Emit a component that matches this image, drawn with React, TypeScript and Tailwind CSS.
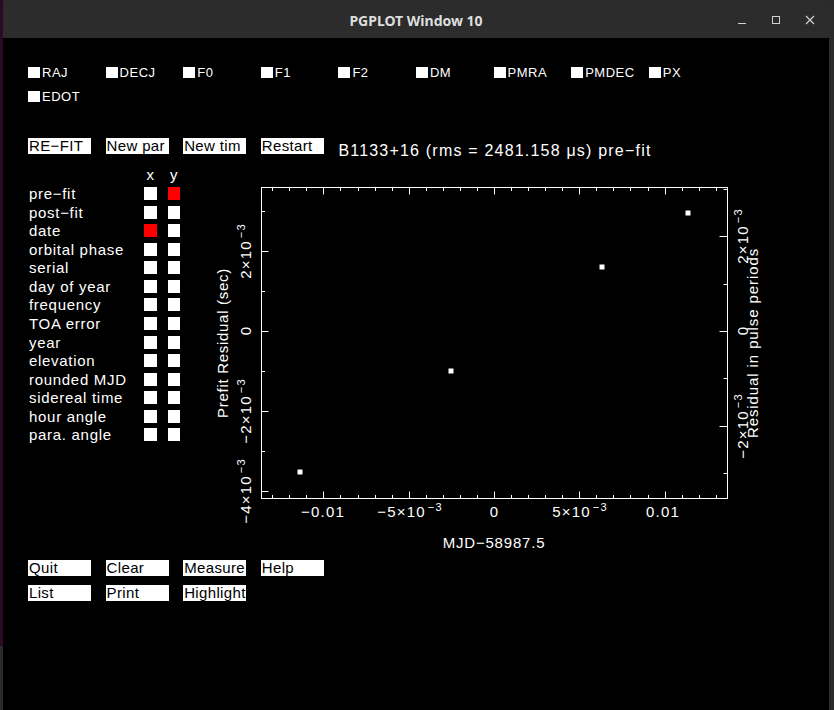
import React from 'react'

const PARAMS = ['RAJ', 'DECJ', 'F0', 'F1', 'F2', 'DM', 'PMRA', 'PMDEC', 'PX', 'EDOT']

const TOP_BUTTONS = ['RE−FIT', 'New par', 'New tim', 'Restart']
const BOTTOM_BUTTONS = [
  ['Quit', 'Clear', 'Measure', 'Help'],
  ['List', 'Print', 'Highlight'],
]

// x/y axis choices, red = currently selected
const AXES: Array<{ label: string; x?: boolean; y?: boolean }> = [
  { label: 'pre−fit', y: true },
  { label: 'post−fit' },
  { label: 'date', x: true },
  { label: 'orbital phase' },
  { label: 'serial' },
  { label: 'day of year' },
  { label: 'frequency' },
  { label: 'TOA error' },
  { label: 'year' },
  { label: 'elevation' },
  { label: 'rounded MJD' },
  { label: 'sidereal time' },
  { label: 'hour angle' },
  { label: 'para. angle' },
]

const POINTS: Array<[number, number]> = [
  [100, 307],
  [251, 206],
  [402, 102],
  [488, 48],
]

function TitleBar() {
  return (
    <div className="h-[36px] bg-[#2c2c2c] rounded-t-[10px] flex items-center shrink-0">
      <div className="w-[104px]" />
      <div className="flex-1 text-center text-[14px] font-bold text-[#dedede] font-['Noto_Sans',sans-serif]">
        PGPLOT Window 10
      </div>
      <div className="w-[104px] flex items-center pr-[2px]">
        <div className="w-[34px] h-[20px] flex items-center justify-center">
          <svg width="10" height="10" viewBox="0 0 10 10">
            <line x1="1" y1="8.5" x2="9" y2="8.5" stroke="#cfcfcf" strokeWidth="1" />
          </svg>
        </div>
        <div className="w-[34px] h-[20px] flex items-center justify-center">
          <svg width="10" height="10" viewBox="0 0 10 10">
            <rect x="1.5" y="1.5" width="7" height="7" fill="none" stroke="#cfcfcf" strokeWidth="1" />
          </svg>
        </div>
        <div className="w-[34px] h-[20px] flex items-center justify-center">
          <svg width="10" height="10" viewBox="0 0 10 10">
            <path d="M1 1 L9 9 M9 1 L1 9" stroke="#cfcfcf" strokeWidth="1.2" />
          </svg>
        </div>
      </div>
    </div>
  )
}

function Button({ label }: { label: string }) {
  return (
    <div className="w-[77.6px] shrink-0">
      <div className="w-[63px] h-[16px] bg-white text-black text-[15px] leading-[16px] pl-[1px] tracking-[0.35px] whitespace-nowrap">
        {label}
      </div>
    </div>
  )
}

function Sup({ base, x, y }: { base: string; x?: number; y?: number }) {
  return (
    <text x={x ?? 0} y={y ?? 0} textAnchor="middle" fontSize={15} letterSpacing={1.2}>
      {base}
      <tspan dx={2} dy={-6} fontSize={11}>
        −3
      </tspan>
    </text>
  )
}

function Plot() {
  const X0 = 294
  const SX = 17060
  const Y0 = 166
  const L = 61.5
  const R = 527.5
  const T = 22.5
  const B = 333.5

  const xTicks = Array.from({ length: 27 }, (_, i) => i - 13)
  const yTicks = [-4, -3, -2, -1, 0, 1, 2, 3]
  const rTicks = [-3, -2, -1, 0, 1, 2, 3]

  return (
    <svg width={590} height={390} className="shrink-0" fill="white" fontFamily="'Liberation Sans', sans-serif">
      <rect x={L} y={T} width={R - L} height={B - T} fill="none" stroke="white" strokeWidth={1} />

      {xTicks.map((k) => {
        const x = Math.round(X0 + k * 0.001 * SX) + 0.5
        const len = k % 5 === 0 ? 7 : 3.5
        return (
          <g key={k} stroke="white" strokeWidth={1}>
            <line x1={x} y1={B} x2={x} y2={B - len} />
            <line x1={x} y1={T} x2={x} y2={T + len} />
          </g>
        )
      })}

      {yTicks.map((k) => {
        const y = Math.round(Y0 - k * 40) + 0.5
        const len = k % 2 === 0 ? 7 : 3.5
        return <line key={k} x1={L} y1={y} x2={L + len} y2={y} stroke="white" strokeWidth={1} />
      })}

      {rTicks.map((k) => {
        const y = Math.round(Y0 - k * 47.3) + 0.5
        const len = k % 2 === 0 ? 8 : 4
        return <line key={k} x1={R} y1={y} x2={R - len} y2={y} stroke="white" strokeWidth={1} />
      })}

      {/* bottom tick labels */}
      <text x={123} y={352} textAnchor="middle" fontSize={15} letterSpacing={1.2}>
        −0.01
      </text>
      <Sup base="−5×10" x={210} y={352} />
      <text x={294} y={352} textAnchor="middle" fontSize={15}>
        0
      </text>
      <Sup base="5×10" x={380} y={352} />
      <text x={463} y={352} textAnchor="middle" fontSize={15} letterSpacing={1.2}>
        0.01
      </text>

      {/* left tick labels */}
      <g transform="translate(51, 86) rotate(-90)">
        <Sup base="2×10" />
      </g>
      <g transform="translate(51, 166) rotate(-90)">
        <text textAnchor="middle" fontSize={15}>0</text>
      </g>
      <g transform="translate(51, 246) rotate(-90)">
        <Sup base="−2×10" />
      </g>
      <g transform="translate(51, 326) rotate(-90)">
        <Sup base="−4×10" />
      </g>

      {/* right tick labels */}
      <g transform="translate(548, 71) rotate(-90)">
        <Sup base="2×10" />
      </g>
      <g transform="translate(548, 166) rotate(-90)">
        <text textAnchor="middle" fontSize={15}>0</text>
      </g>
      <g transform="translate(548, 261) rotate(-90)">
        <Sup base="−2×10" />
      </g>

      {/* axis titles */}
      <g transform="translate(27.5, 178) rotate(-90)">
        <text textAnchor="middle" fontSize={15} letterSpacing={0.7}>
          Prefit Residual (sec)
        </text>
      </g>
      <g transform="translate(558, 178) rotate(-90)">
        <text textAnchor="middle" fontSize={15} letterSpacing={0.9}>
          Residual in pulse periods
        </text>
      </g>
      <text x={294} y={383} textAnchor="middle" fontSize={15} letterSpacing={0.8}>
        MJD−58987.5
      </text>

      {POINTS.map(([x, y], i) => (
        <rect key={i} x={x - 2.5} y={y - 2.5} width={5} height={5} fill="white" />
      ))}
    </svg>
  )
}

export default function App() {
  return (
    <div className="w-[834px] h-[710px] flex bg-[#2b2b2b] overflow-hidden">
      <div className="w-[3px] h-[646px] bg-[#2c0a24] shrink-0" />
      <div className="w-[826px] mt-[2px] flex flex-col shrink-0">
        <TitleBar />
        <div className="flex-1 bg-black pl-[25px] pt-[22px] text-white font-['Liberation_Sans',sans-serif]">
          {/* fit parameters */}
          <div className="w-[720px] flex flex-wrap text-[13px] tracking-[0.5px]">
            {PARAMS.map((p) => (
              <div key={p} className="w-[77.6px] h-[24px] flex items-center shrink-0">
                <span className="w-[12px] h-[11px] bg-white shrink-0" />
                <span className="ml-[2px] leading-none">{p}</span>
              </div>
            ))}
          </div>

          {/* actions + plot title */}
          <div className="mt-[30px] h-[16px] flex items-start">
            {TOP_BUTTONS.map((b) => (
              <Button key={b} label={b} />
            ))}
            <div className="mt-[5px] text-[16px] leading-[16px] tracking-[1.2px] whitespace-nowrap">
              B1133+16 (rms = 2481.158 μs) pre−fit
            </div>
          </div>

          {/* axis selector + plot */}
          <div className="mt-[11px] flex">
            <div className="w-[172px] shrink-0 text-[15px] tracking-[0.7px]">
              <div className="h-[19.5px] flex items-center">
                <div className="w-[116px]" />
                <div className="w-[13px] text-center">x</div>
                <div className="w-[12px] ml-[11px] text-center">y</div>
              </div>
              {AXES.map((a) => (
                <div key={a.label} className="h-[18.54px] flex items-center">
                  <div className="w-[116px] pl-[1px] whitespace-nowrap leading-none">{a.label}</div>
                  <span className={`w-[13px] h-[13px] ${a.x ? 'bg-[#ff0000]' : 'bg-white'}`} />
                  <span className={`w-[12px] h-[13px] ml-[11px] ${a.y ? 'bg-[#ff0000]' : 'bg-white'}`} />
                </div>
              ))}
            </div>
            <Plot />
          </div>

          {/* bottom actions */}
          <div className="mt-[5px] flex flex-col gap-y-[9px]">
            {BOTTOM_BUTTONS.map((row, i) => (
              <div key={i} className="flex">
                {row.map((b) => (
                  <Button key={b} label={b} />
                ))}
              </div>
            ))}
          </div>
        </div>
      </div>
    </div>
  )
}
